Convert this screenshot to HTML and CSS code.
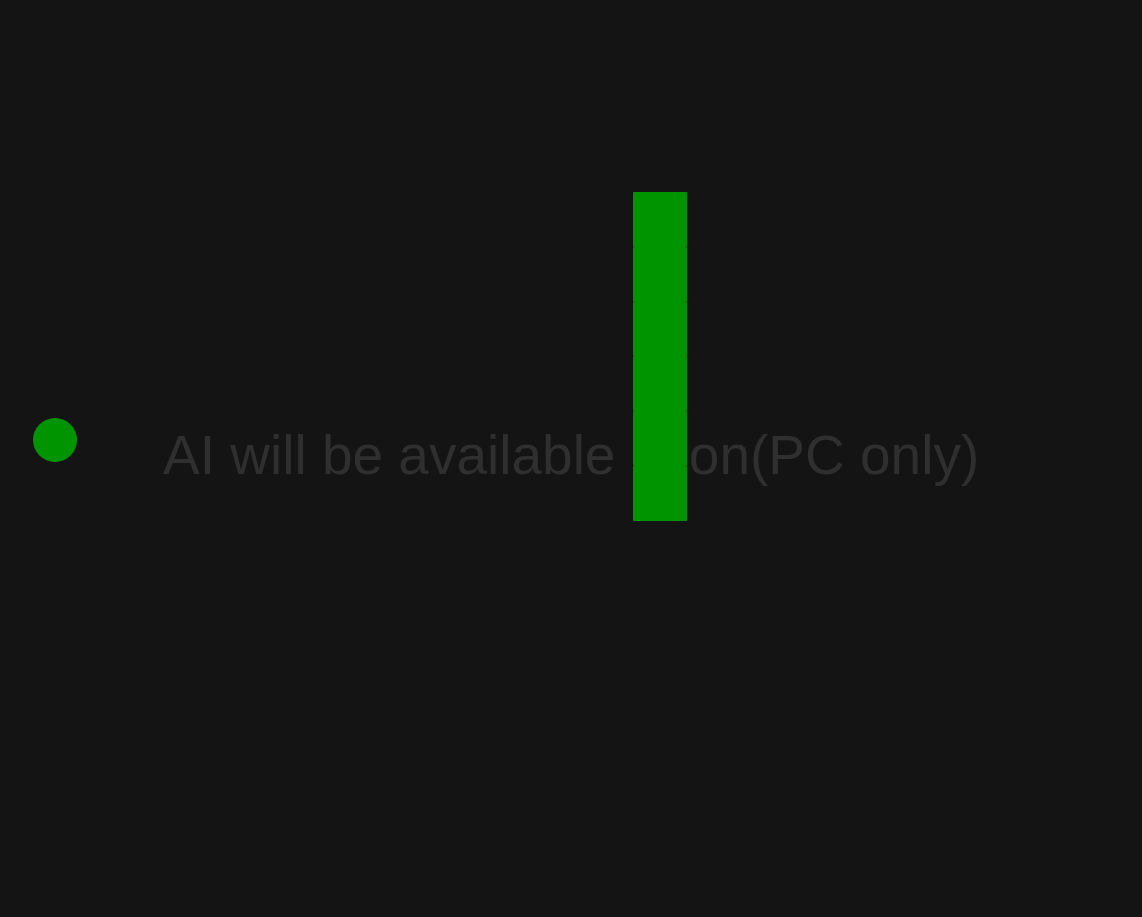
FILE: index.html
```html
<!DOCTYPE html>
<html>
<head>
<meta charset="utf-8">
<link rel="stylesheet" href="styles.css">
</head>
<body>
<div class="stage">
  <div class="row">
    <div class="dot"></div>
    <div class="msg">AI will be available soon(PC only)</div>
  </div>
  <div class="bar">
    <div class="seg"></div><div class="seg"></div><div class="seg"></div>
    <div class="seg"></div><div class="seg"></div><div class="seg"></div>
  </div>
</div>
</body>
</html>
```
FILE: styles.css
```css
html, body {
  margin: 0;
  padding: 0;
  background: #141414;
  width: 1142px;
  height: 917px;
  overflow: hidden;
}
.stage {
  position: relative;
  width: 1142px;
  height: 917px;
  font-family: "Liberation Sans", Arial, sans-serif;
}
.row {
  display: flex;
  align-items: flex-start;
  padding-top: 418px;
  padding-left: 33px;
}
.dot {
  width: 44px;
  height: 44px;
  border-radius: 50%;
  background: #009400;
  flex: none;
}
.msg {
  margin-left: 86px;
  margin-top: 5px;
  font-size: 55px;
  line-height: 64px;
  color: #2f2f2f;
  white-space: nowrap;
}
.bar {
  position: absolute;
  left: 633px;
  top: 192px;
  width: 54px;
  display: flex;
  flex-direction: column;
}
.seg {
  height: 54.8px;
  background: #009400;
  border-radius: 1px;
}
```
